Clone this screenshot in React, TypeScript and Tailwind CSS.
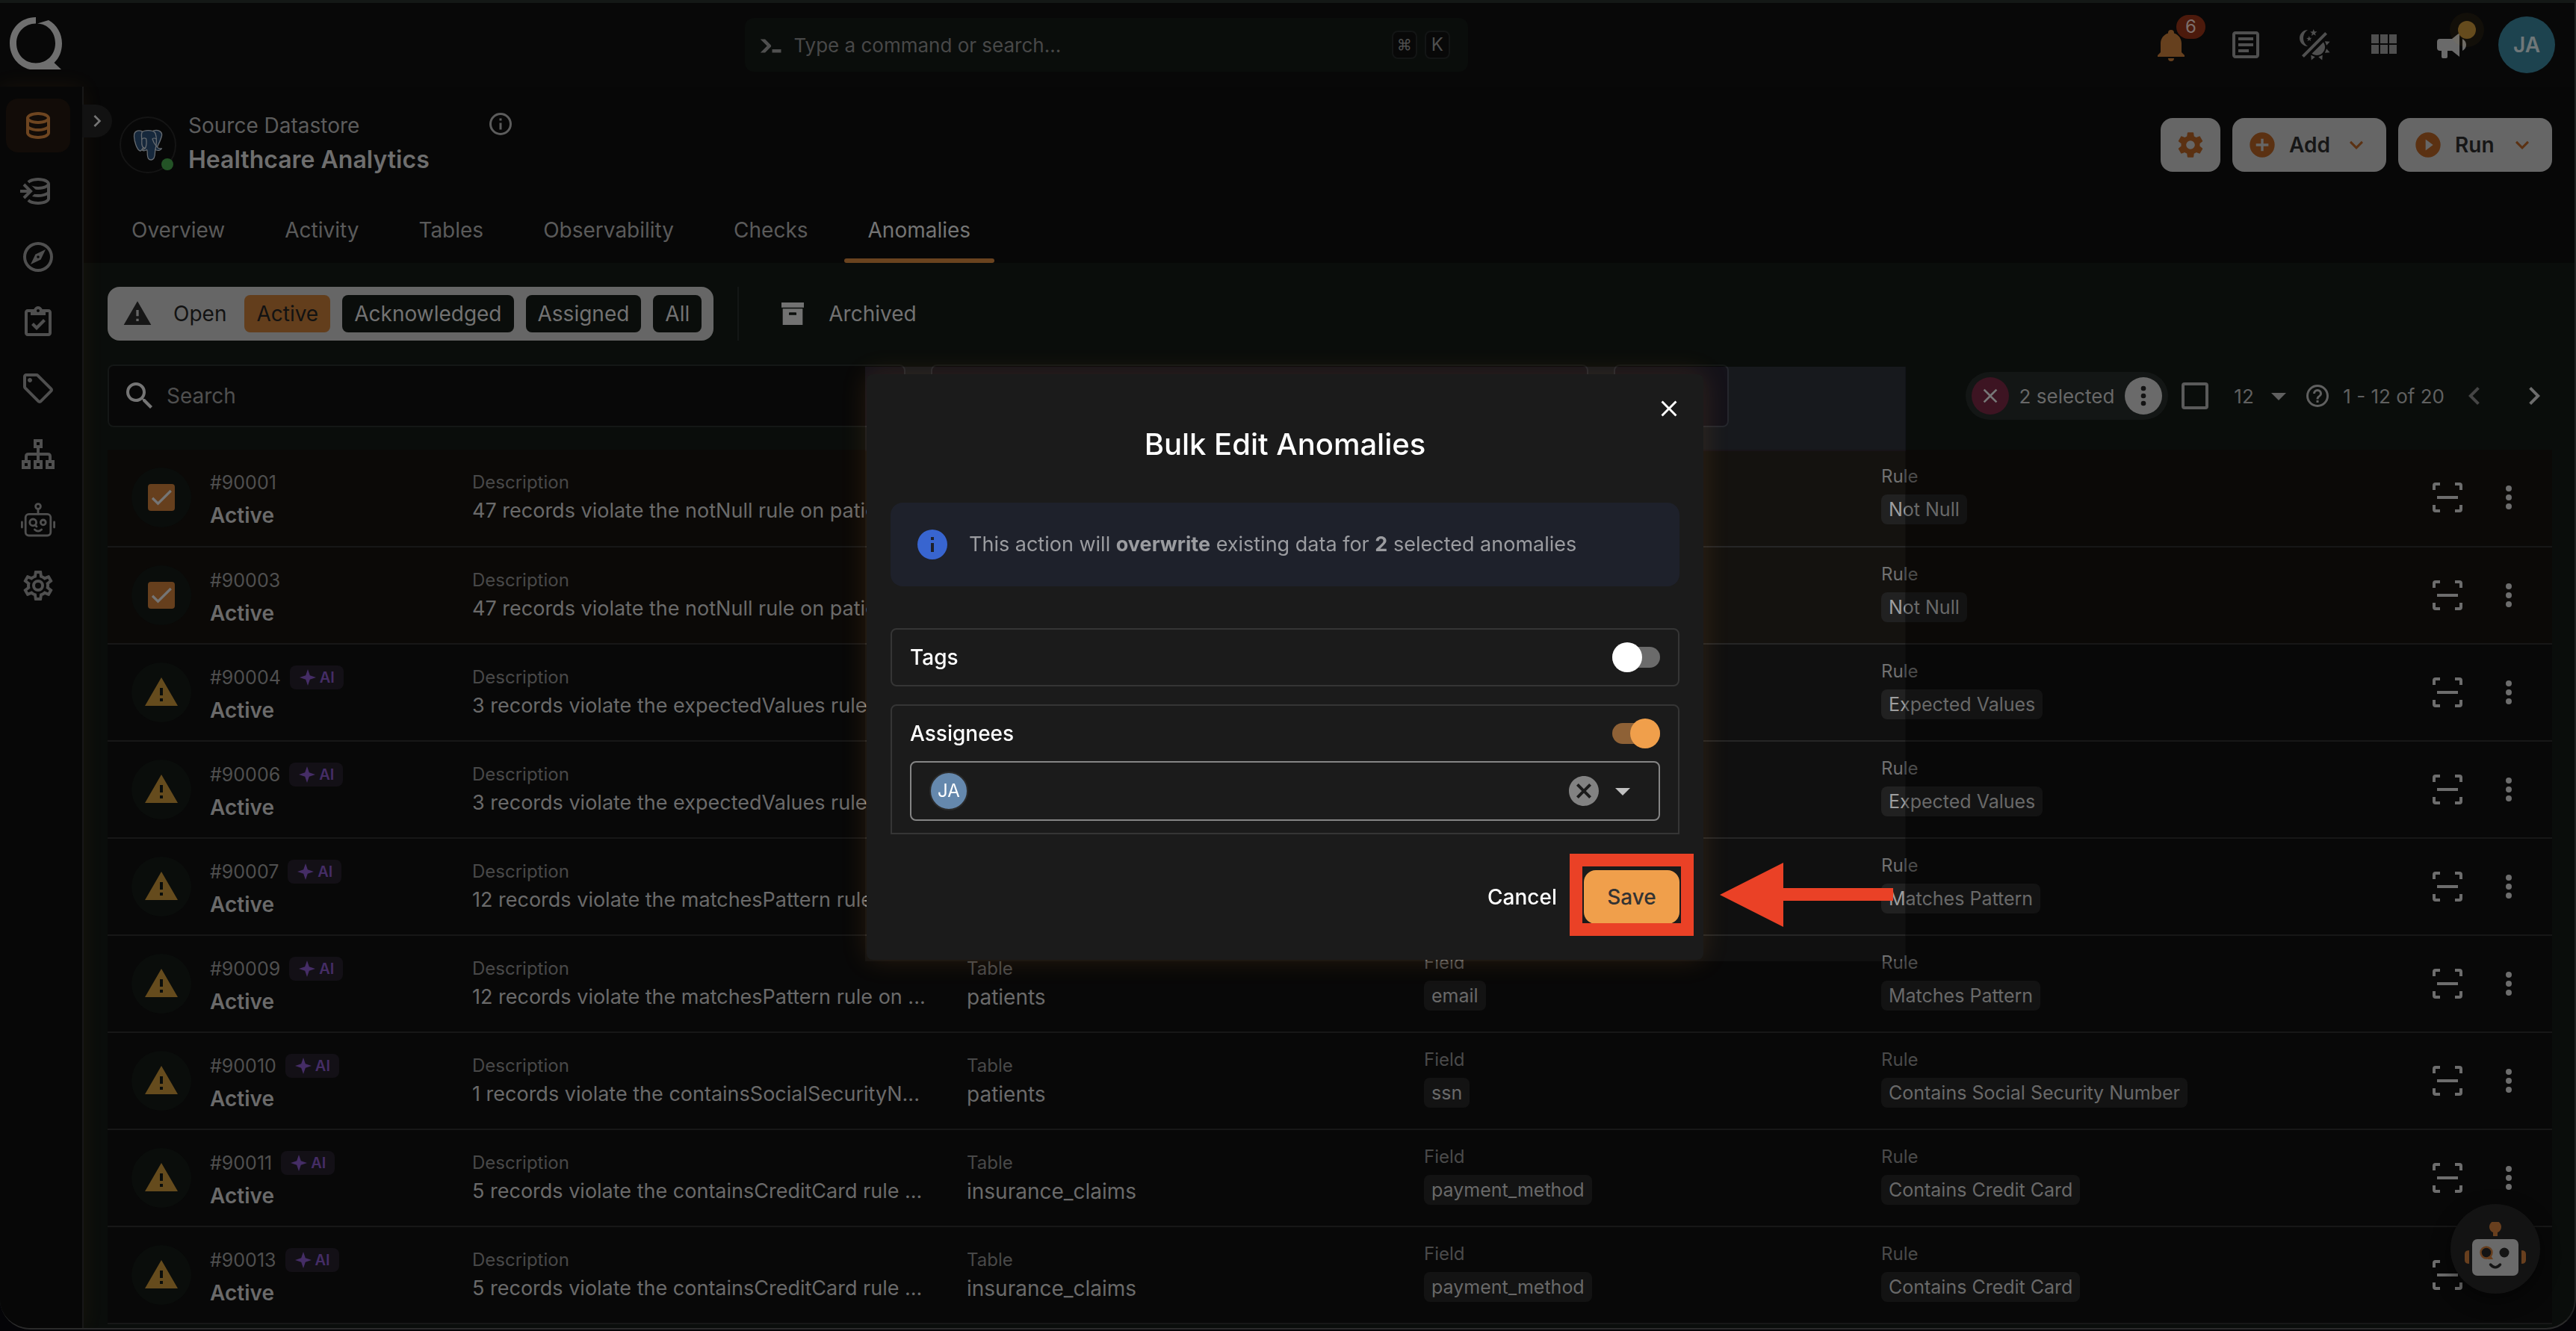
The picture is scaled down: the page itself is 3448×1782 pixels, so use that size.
import React from "react";

const P = {
  database:
    "M12 3C7.58 3 4 4.79 4 7V17C4 19.21 7.59 21 12 21S20 19.21 20 17V7C20 4.79 16.42 3 12 3M18 17C18 17.5 15.87 19 12 19S6 17.5 6 17V14.77C7.61 15.55 9.72 16 12 16S16.39 15.55 18 14.77V17M18 12.45C16.7 13.4 14.42 14 12 14C9.58 14 7.3 13.4 6 12.45V9.64C7.47 10.47 9.61 11 12 11C14.39 11 16.53 10.47 18 9.64V12.45M12 9C8.13 9 6 7.5 6 7S8.13 5 12 5C15.87 5 18 6.5 18 7S15.87 9 12 9Z",
  compass:
    "M7,17L10.2,10.2L17,7L13.8,13.8L7,17M12,11.1A0.9,0.9 0 0,0 11.1,12A0.9,0.9 0 0,0 12,12.9A0.9,0.9 0 0,0 12.9,12A0.9,0.9 0 0,0 12,11.1M12,2A10,10 0 0,1 22,12A10,10 0 0,1 12,22A10,10 0 0,1 2,12A10,10 0 0,1 12,2M12,4A8,8 0 0,0 4,12A8,8 0 0,0 12,20A8,8 0 0,0 20,12A8,8 0 0,0 12,4Z",
  clipboard:
    "M19 3H14.82C14.4 1.84 13.3 1 12 1S9.6 1.84 9.18 3H5C3.9 3 3 3.9 3 5V19C3 20.1 3.9 21 5 21H19C20.1 21 21 20.1 21 19V5C21 3.9 20.1 3 19 3M12 3C12.55 3 13 3.45 13 4S12.55 5 12 5 11 4.55 11 4 11.45 3 12 3M7 7H17V5H19V19H5V5H7V7M7.5 13.5L9 12L11 14L15.5 9.5L17 11L11 17L7.5 13.5Z",
  tag: "M21.41 11.58L12.41 2.58C12.04 2.21 11.53 2 11 2H4C2.9 2 2 2.9 2 4V11C2 11.53 2.21 12.04 2.59 12.41L11.58 21.41C11.95 21.78 12.47 22 13 22S14.05 21.78 14.41 21.41L21.41 14.41C21.79 14.04 22 13.53 22 13C22 12.47 21.79 11.96 21.41 11.58M13 20L4 11V4H11L20 13M6.5 5C7.33 5 8 5.67 8 6.5S7.33 8 6.5 8 5 7.33 5 6.5 5.67 5 6.5 5Z",
  cogOutline:
    "M12,8A4,4 0 0,1 16,12A4,4 0 0,1 12,16A4,4 0 0,1 8,12A4,4 0 0,1 12,8M12,10A2,2 0 0,0 10,12A2,2 0 0,0 12,14A2,2 0 0,0 14,12A2,2 0 0,0 12,10M10,22C9.75,22 9.54,21.82 9.5,21.58L9.13,18.93C8.5,18.68 7.96,18.34 7.44,17.94L4.95,18.95C4.73,19.03 4.46,18.95 4.34,18.73L2.34,15.27C2.21,15.05 2.27,14.78 2.46,14.63L4.57,12.97L4.5,12L4.57,11L2.46,9.37C2.27,9.22 2.21,8.95 2.34,8.73L4.34,5.27C4.46,5.05 4.73,4.96 4.95,5.05L7.44,6.05C7.96,5.66 8.5,5.32 9.13,5.07L9.5,2.42C9.54,2.18 9.75,2 10,2H14C14.25,2 14.46,2.18 14.5,2.42L14.87,5.07C15.5,5.32 16.04,5.66 16.56,6.05L19.05,5.05C19.27,4.96 19.54,5.05 19.66,5.27L21.66,8.73C21.79,8.95 21.73,9.22 21.54,9.37L19.43,11L19.5,12L19.43,13L21.54,14.63C21.73,14.78 21.79,15.05 21.66,15.27L19.66,18.73C19.54,18.95 19.27,19.04 19.05,18.95L16.56,17.95C16.04,18.34 15.5,18.68 14.87,18.93L14.5,21.58C14.46,21.82 14.25,22 14,22H10M11.25,4L10.88,6.61C9.68,6.86 8.62,7.5 7.85,8.39L5.44,7.35L4.69,8.65L6.8,10.2C6.4,11.37 6.4,12.64 6.8,13.8L4.68,15.36L5.43,16.66L7.86,15.62C8.63,16.5 9.68,17.14 10.87,17.38L11.24,20H12.76L13.13,17.39C14.32,17.14 15.37,16.5 16.14,15.62L18.57,16.66L19.32,15.36L17.2,13.81C17.6,12.64 17.6,11.37 17.2,10.2L19.31,8.65L18.56,7.35L16.15,8.39C15.38,7.5 14.32,6.86 13.12,6.62L12.75,4H11.25Z",
  cog: "M12,15.5A3.5,3.5 0 0,1 8.5,12A3.5,3.5 0 0,1 12,8.5A3.5,3.5 0 0,1 15.5,12A3.5,3.5 0 0,1 12,15.5M19.43,12.97C19.47,12.65 19.5,12.33 19.5,12C19.5,11.67 19.47,11.34 19.43,11L21.54,9.37C21.73,9.22 21.78,8.95 21.66,8.73L19.66,5.27C19.54,5.05 19.27,4.96 19.05,5.05L16.56,6.05C16.04,5.66 15.5,5.32 14.87,5.07L14.5,2.42C14.46,2.18 14.25,2 14,2H10C9.75,2 9.54,2.18 9.5,2.42L9.13,5.07C8.5,5.32 7.96,5.66 7.44,6.05L4.95,5.05C4.73,4.96 4.46,5.05 4.34,5.27L2.34,8.73C2.21,8.95 2.27,9.22 2.46,9.37L4.57,11C4.53,11.34 4.5,11.67 4.5,12C4.5,12.33 4.53,12.65 4.57,12.97L2.46,14.63C2.27,14.78 2.21,15.05 2.34,15.27L4.34,18.73C4.46,18.95 4.73,19.03 4.95,18.95L7.44,17.94C7.96,18.34 8.5,18.68 9.13,18.93L9.5,21.58C9.54,21.82 9.75,22 10,22H14C14.25,22 14.46,21.82 14.5,21.58L14.87,18.93C15.5,18.67 16.04,18.34 16.56,17.94L19.05,18.95C19.27,19.03 19.54,18.95 19.66,18.73L21.66,15.27C21.78,15.05 21.73,14.78 21.54,14.63L19.43,12.97Z",
  alert: "M13 14H11V9H13M13 18H11V16H13M1 21H23L12 2L1 21Z",
  archive:
    "M3,3H21V7H3V3M4,8H20V21H4V8M9.5,11A0.5,0.5 0 0,0 9,11.5V13H15V11.5A0.5,0.5 0 0,0 14.5,11H9.5Z",
  magnify:
    "M9.5,3A6.5,6.5 0 0,1 16,9.5C16,11.11 15.41,12.59 14.44,13.73L14.71,14H15.5L20.5,19L19,20.5L14,15.5V14.71L13.73,14.44C12.59,15.41 11.11,16 9.5,16A6.5,6.5 0 0,1 3,9.5A6.5,6.5 0 0,1 9.5,3M9.5,5C7,5 5,7 5,9.5C5,12 7,14 9.5,14C12,14 14,12 14,9.5C14,7 12,5 9.5,5Z",
  bell: "M21,19V20H3V19L5,17V11C5,7.9 7.03,5.17 10,4.29C10,4.19 10,4.1 10,4A2,2 0 0,1 12,2A2,2 0 0,1 14,4C14,4.1 14,4.19 14,4.29C16.97,5.17 19,7.9 19,11V17L21,19M14,21A2,2 0 0,1 12,23A2,2 0 0,1 10,21",
  textBox:
    "M5,3C3.89,3 3,3.89 3,5V19C3,20.11 3.89,21 5,21H19C20.11,21 21,20.11 21,19V5C21,3.89 20.11,3 19,3H5M5,5H19V19H5V5M7,7V9H17V7H7M7,11V13H17V11H7M7,15V17H14V15H7Z",
  theme:
    "M7.5,2C5.71,3.15 4.5,5.18 4.5,7.5C4.5,9.82 5.71,11.85 7.53,13C4.46,13 2,10.54 2,7.5A5.5,5.5 0 0,1 7.5,2M19.07,3.5L20.5,4.93L4.93,20.5L3.5,19.07L19.07,3.5M12.89,5.93L11.41,5L9.97,6L10.39,4.3L9,3.24L10.75,3.12L11.33,1.47L12,3.1L13.73,3.13L12.38,4.26L12.89,5.93M9.59,9.54L8.43,8.81L7.31,9.59L7.65,8.27L6.56,7.44L7.92,7.35L8.37,6.06L8.88,7.33L10.24,7.36L9.19,8.23L9.59,9.54M19,13.5A5.5,5.5 0 0,1 13.5,19C12.28,19 11.15,18.6 10.24,17.93L17.93,10.24C18.6,11.15 19,12.28 19,13.5M14.6,20.08L17.37,18.93L17.13,22.28L14.6,20.08M18.93,17.38L20.08,14.61L22.28,17.15L18.93,17.38M20.08,12.42L18.94,9.64L22.28,9.88L20.08,12.42M9.63,18.93L12.4,20.08L9.87,22.27L9.63,18.93Z",
  grid: "M16 5V11H21V5M10 11H15V5H10M16 18H21V12H16M10 18H15V12H10M4 18H9V12H4M4 11H9V5H4V11Z",
  bullhorn:
    "M12,8H4A2,2 0 0,0 2,10V14A2,2 0 0,0 4,16H5V20A1,1 0 0,0 6,21H8A1,1 0 0,0 9,20V16H12L17,20V4L12,8M21.5,12C21.5,13.71 20.54,15.26 19,16V8C20.53,8.75 21.5,10.3 21.5,12Z",
  console:
    "M13,19V16H21V19H13M8.5,13L2.47,7H6.71L11.67,11.95C12.25,12.54 12.25,13.5 11.67,14.07L6.74,19H2.5L8.5,13Z",
  dots: "M12,16A2,2 0 0,1 14,18A2,2 0 0,1 12,20A2,2 0 0,1 10,18A2,2 0 0,1 12,16M12,10A2,2 0 0,1 14,12A2,2 0 0,1 12,14A2,2 0 0,1 10,12A2,2 0 0,1 12,10M12,4A2,2 0 0,1 14,6A2,2 0 0,1 12,8A2,2 0 0,1 10,6A2,2 0 0,1 12,4Z",
  chevronRight: "M8.59,16.58L13.17,12L8.59,7.41L10,6L16,12L10,18L8.59,16.58Z",
  chevronLeft: "M15.41,16.58L10.83,12L15.41,7.41L14,6L8,12L14,18L15.41,16.58Z",
  chevronDown: "M7.41,8.58L12,13.17L16.59,8.58L18,10L12,16L6,10L7.41,8.58Z",
  menuDown: "M7,10L12,15L17,10H7Z",
  close:
    "M19,6.41L17.59,5L12,10.59L6.41,5L5,6.41L10.59,12L5,17.59L6.41,19L12,13.41L17.59,19L19,17.59L13.41,12L19,6.41Z",
  plusCircle:
    "M17,13H13V17H11V13H7V11H11V7H13V11H17M12,2A10,10 0 0,0 2,12A10,10 0 0,0 12,22A10,10 0 0,0 22,12A10,10 0 0,0 12,2Z",
  playCircle:
    "M10,16.5V7.5L16,12M12,2A10,10 0 0,0 2,12A10,10 0 0,0 12,22A10,10 0 0,0 22,12A10,10 0 0,0 12,2Z",
  closeCircle:
    "M12,2C17.53,2 22,6.47 22,12C22,17.53 17.53,22 12,22C6.47,22 2,17.53 2,12C2,6.47 6.47,2 12,2M15.59,7L12,10.59L8.41,7L7,8.41L10.59,12L7,15.59L8.41,17L12,13.41L15.59,17L17,15.59L13.41,12L17,8.41L15.59,7Z",
  info: "M13,9H11V7H13M13,17H11V11H13M12,2A10,10 0 0,0 2,12A10,10 0 0,0 12,22A10,10 0 0,0 22,12A10,10 0 0,0 12,2Z",
  infoOutline:
    "M11,9H13V7H11M12,20C7.59,20 4,16.41 4,12C4,7.59 7.59,4 12,4C16.41,4 20,7.59 20,12C20,16.41 16.41,20 12,20M12,2A10,10 0 0,0 2,12A10,10 0 0,0 12,22A10,10 0 0,0 22,12A10,10 0 0,0 12,2M11,17H13V11H11V17Z",
  help: "M11,18H13V16H11V18M12,2A10,10 0 0,0 2,12A10,10 0 0,0 12,22A10,10 0 0,0 22,12A10,10 0 0,0 12,2M12,20C7.59,20 4,16.41 4,12C4,7.59 7.59,4 12,4C16.41,4 20,7.59 20,12C20,16.41 16.41,20 12,20M12,6A4,4 0 0,0 8,10H10A2,2 0 0,1 12,8A2,2 0 0,1 14,10C14,12 11,11.75 11,15H13C13,12.75 16,12.5 16,10A4,4 0 0,0 12,6Z",
};

function Icon({ d, className = "" }: { d: string; className?: string }) {
  return (
    <svg viewBox="0 0 24 24" fill="currentColor" aria-hidden="true" className={"shrink-0 " + className}>
      <path d={d} />
    </svg>
  );
}

function Logo() {
  return (
    <svg viewBox="0 0 70 70" className="h-[70px] w-[70px]" fill="#6f6f6f" role="img" aria-label="Home">
      <path
        fillRule="evenodd"
        d="M35 0C15 0 0 15 0 35C0 52 11 66 27 70H69L59.500 61C66 55 70 46 70 35C70 22 63 10 52 4L37 8.500C51 9 61 20 61 35C61 50 50 61.500 35 61.500C20 61.500 9 50 9 35C9 20 20 8.500 35 8.500Z"
      />
    </svg>
  );
}

function DatabaseImport() {
  return (
    <svg viewBox="0 0 24 24" aria-hidden="true" className="h-12 w-12 overflow-visible">
      <path fill="#4f4f4f" d={P.database} />
      <path d="M0 12H6M2.500 7L7.500 12L2.500 17" fill="none" stroke="#070707" strokeWidth="5.500" />
      <path d="M0 12H6.500M2.500 7.500L7 12L2.500 16.500" fill="none" stroke="#4f4f4f" strokeWidth="2" />
    </svg>
  );
}

function Sitemap() {
  return (
    <svg viewBox="0 0 24 24" aria-hidden="true" className="h-12 w-12" fill="none" stroke="#4f4f4f" strokeWidth="2">
      <path d="M10 3H14V7H10ZM2 17H6V21H2ZM10 17H14V21H10ZM18 17H22V21H18ZM12 8V16M4 16V13.500Q4 12 5.500 12H18.500Q20 12 20 13.500V16" />
    </svg>
  );
}

function Bot() {
  return (
    <svg viewBox="0 0 24 24" aria-hidden="true" className="h-12 w-12 overflow-visible" fill="none" stroke="#4f4f4f" strokeWidth="1.400" strokeLinecap="round">
      <circle cx="12" cy="3" r="1.700" />
      <path d="M12 5V8M1.200 13.500V17M22.800 13.500V17M10 15.500L11 16.500M9.700 18.500Q12 20.600 14.300 18.500" />
      <rect x="3.600" y="8.200" width="16.800" height="14.300" rx="2.200" />
      <circle cx="8.600" cy="13.700" r="2.200" />
      <circle cx="15.400" cy="13.700" r="1.700" />
    </svg>
  );
}

function Elephant() {
  return (
    <svg viewBox="0 0 40 42" aria-hidden="true" className="h-[42px] w-10" fill="#16283c" stroke="#666b70" strokeWidth="1.300" strokeLinejoin="round" strokeLinecap="round">
      <path d="M12 2.500C6 .5 1 3 1.500 10C2 17 5 26 8.500 28.500C10.500 30 12 27.500 13 25.500L20 24Z" />
      <path d="M27 2C34 0 39.500 3.500 38.500 8.500C37.500 14 34 20 32.500 24C34 26.500 37 26 38.500 25.800C37.500 28 34 29 31 28L25 22Z" />
      <path d="M12 4C15 1 25 .5 29 4C32 8 31.500 17 31 22C30.500 25 29.500 27 29.500 31C29.500 36 29 40.500 24.500 41C20.500 41.200 19.500 38 19.300 34C19.200 30.500 19.500 28.500 18.500 27.500C16 29 13.500 29 12.500 28C14 27 15.500 27 16.500 25.500C12 25.500 11.500 20 11.800 16C12 11 10.500 8 12 4Z" />
      <path d="M16.500 25.500C18.500 21 18.500 17 17.500 12.500C15.500 11.500 13 12 11.800 13.500M31.500 13C28.500 11.500 26.500 12 26 13C27 17 29 20 31.500 23" fill="none" />
    </svg>
  );
}

function Assistant() {
  return (
    <svg viewBox="0 0 82 72" className="h-[72px] w-[82px]" role="img" aria-label="Assistant">
      <path d="M38 14A8 8 0 1 1 44 14V19H38Z" fill="#683f1e" />
      <path d="M6 38V56Q0 56 0 51V43Q0 38 6 38ZM76 38V56Q82 56 82 51V43Q82 38 76 38Z" fill="#683f1e" />
      <rect x="10" y="23" width="62" height="49" rx="7" fill="#6a6a6a" />
      <circle cx="29" cy="41" r="7.500" fill="#141414" stroke="#683f1e" strokeWidth="2.500" />
      <path d="M31 47L35 45L38 50H31Z" fill="#683f1e" />
      <circle cx="53" cy="41" r="6.500" fill="#141414" />
      <path d="M34.500 57Q41 64.500 47.500 57" fill="none" stroke="#141414" strokeWidth="3.500" strokeLinecap="round" />
    </svg>
  );
}

type Row = {
  id: string;
  selected?: boolean;
  description: string;
  table?: string;
  field?: string;
  rule: string;
};

const rows: Row[] = [
  { id: "#90001", selected: true, description: "47 records violate the notNull rule on patie...", rule: "Not Null" },
  { id: "#90003", selected: true, description: "47 records violate the notNull rule on patie...", rule: "Not Null" },
  { id: "#90004", description: "3 records violate the expectedValues rule ...", rule: "Expected Values" },
  { id: "#90006", description: "3 records violate the expectedValues rule ...", rule: "Expected Values" },
  { id: "#90007", description: "12 records violate the matchesPattern rule on ...", rule: "Matches Pattern" },
  { id: "#90009", description: "12 records violate the matchesPattern rule on ...", table: "patients", field: "email", rule: "Matches Pattern" },
  { id: "#90010", description: "1 records violate the containsSocialSecurityN...", table: "patients", field: "ssn", rule: "Contains Social Security Number" },
  { id: "#90011", description: "5 records violate the containsCreditCard rule ...", table: "insurance_claims", field: "payment_method", rule: "Contains Credit Card" },
  { id: "#90013", description: "5 records violate the containsCreditCard rule ...", table: "insurance_claims", field: "payment_method", rule: "Contains Credit Card" },
];

function ChipCell({ label, value }: { label: string; value: string }) {
  return (
    <>
      <div className="text-2xl leading-10 text-[#4a4a4a]">{label}</div>
      <span className="mt-1 inline-block h-10 rounded-lg bg-[#131313] px-2.5 text-[25px] leading-10 text-[#696969]">{value}</span>
    </>
  );
}

function AnomalyRow({ row }: { row: Row }) {
  return (
    <tr className={"h-[130px] border-b-2 border-[#171717] align-top whitespace-nowrap " + (row.selected ? "bg-[#0b0907]" : "bg-[#080808]")}>
      <td className="p-0 pl-8">
        <div className="flex">
          <div className="mt-6 mr-[25px] grid size-20 place-items-center rounded-full bg-[#0a0d0b]">
            {row.selected ? (
              <span className="relative grid size-9 place-items-center">
                <input type="checkbox" defaultChecked aria-label={"Select " + row.id} className="size-9 appearance-none rounded-sm bg-[#663f1d]" />
                <svg viewBox="0 0 24 24" className="pointer-events-none absolute size-9" fill="none" stroke="#757575" strokeWidth="2.200" aria-hidden="true">
                  <path d="M4 12.500L9 17.500L20.500 6" />
                </svg>
              </span>
            ) : (
              <Icon d={P.alert} className="size-12 text-[#654b1d]" />
            )}
          </div>
          <div className="pt-6">
            <div className="flex items-center gap-3 text-[25px] leading-10 text-[#4f4f4f]">
              {row.id}
              {!row.selected && (
                <span className="flex h-8 items-center gap-1 rounded-lg bg-[#131016] px-3 text-xl font-semibold text-[#452d66]">
                  <svg viewBox="0 0 24 24" className="size-6" fill="currentColor" aria-hidden="true">
                    <path d="M12 1L14.800 9.200L23 12L14.800 14.800L12 23L9.200 14.800L1 12L9.200 9.200Z" />
                  </svg>
                  AI
                </span>
              )}
            </div>
            <div className="text-[28px] leading-[48px] font-semibold text-[#6a6a6a]">Active</div>
          </div>
        </div>
      </td>
      <td className="overflow-hidden p-0 pt-6">
        <div className="text-2xl leading-10 text-[#484848]">Description</div>
        <div className="text-[27px] leading-9 text-[#6a6a6a]">{row.description}</div>
      </td>
      <td className="p-0 pt-6">
        {row.table && (
          <>
            <div className="text-2xl leading-10 text-[#484848]">Table</div>
            <a href="#" className="block text-[28px] leading-9 text-[#6a6a6a]">{row.table}</a>
          </>
        )}
      </td>
      <td className="p-0 pt-4">{row.field && <ChipCell label="Field" value={row.field} />}</td>
      <td className="p-0 pt-4">
        <ChipCell label="Rule" value={row.rule} />
      </td>
      <td className="p-0 pt-10">
        <div className="flex gap-[34px]">
          <button type="button" aria-label="Expand" className="grid size-12 place-items-center">
            <svg viewBox="0 0 40 40" className="size-10" fill="none" stroke="#6d6d6d" strokeWidth="4" aria-hidden="true">
              <path d="M2 10V4Q2 2 4 2H10M30 2H36Q38 2 38 4V10M2 30V36Q2 38 4 38H10M30 38H36Q38 38 38 36V30M6 20H34" />
            </svg>
          </button>
          <button type="button" aria-label="More actions">
            <Icon d={P.dots} className="size-12 text-[#6d6d6d]" />
          </button>
        </div>
      </td>
    </tr>
  );
}

const navItems = [
  { label: "Datastores", icon: <Icon d={P.database} className="size-12 text-[#6e4520]" />, active: true },
  { label: "Enrichment", icon: <DatabaseImport /> },
  { label: "Explore", icon: <Icon d={P.compass} className="size-12" /> },
  { label: "Library", icon: <Icon d={P.clipboard} className="size-12" /> },
  { label: "Tags", icon: <Icon d={P.tag} className="size-12" /> },
  { label: "Flows", icon: <Sitemap /> },
  { label: "Agent", icon: <Bot /> },
  { label: "Settings", icon: <Icon d={P.cogOutline} className="size-12" /> },
];

function TopBar() {
  return (
    <header className="grid h-28 shrink-0 grid-cols-[998fr_968fr_1482fr] items-center bg-[#080808]">
      <a href="#" className="mb-1 ml-[13px] w-fit"><Logo /></a>
      <label className="flex h-[72px] items-center rounded-xl bg-[#0a0d0b] pr-6 pl-[17px]">
        <Icon d={P.console} className="size-9 text-[#4f4f4f]" />
        <input
          type="text"
          aria-label="Command"
          placeholder="Type a command or search..."
          className="ml-3 min-w-0 flex-1 bg-transparent text-[26px] placeholder:text-[#484848]"
        />
        <span className="flex gap-2.5 text-2xl text-[#4f4f4f]">
          <kbd className="grid h-[38px] w-[34px] place-items-center rounded-lg border-2 border-[#131515] bg-[#080808] font-[inherit] text-xl">⌘</kbd>
          <kbd className="grid h-[38px] w-[34px] place-items-center rounded-lg border-2 border-[#131515] bg-[#080808] font-[inherit]">K</kbd>
        </span>
      </label>
      <div className="flex items-center justify-end pr-[26px] text-[#4f4f4f]">
        <button type="button" aria-label="Notifications" className="relative mr-[52px]">
          <Icon d={P.bell} className="size-12 text-[#66401e]" />
          <span className="absolute -top-4 left-[31px] h-8 w-[39px] rounded-2xl bg-[#4c1a0c] text-center text-2xl leading-8 text-[#7d706c]">6</span>
        </button>
        <button type="button" aria-label="Documents" className="mr-11"><Icon d={P.textBox} className="size-12" /></button>
        <button type="button" aria-label="Theme" className="mr-11"><Icon d={P.theme} className="size-12" /></button>
        <button type="button" aria-label="Apps" className="mr-11"><Icon d={P.grid} className="size-12" /></button>
        <button type="button" aria-label="News" className="relative mr-[38px]">
          <Icon d={P.bullhorn} className="size-12 text-[#6a6a6a]" />
          <span className="absolute -top-[19px] left-[21px] grid size-[46px] place-items-center rounded-full bg-[#e0a030]/5">
            <span className="size-6 rounded-full bg-[#654b1d]" />
          </span>
        </button>
        <button type="button" className="grid size-[76px] place-items-center rounded-full bg-[#1d434f] text-[28px] font-semibold text-[#6f7779]">JA</button>
      </div>
    </header>
  );
}

const tabs = ["Overview", "Activity", "Tables", "Observability", "Checks", "Anomalies"];

function DatastoreHeader() {
  return (
    <section className="bg-[#070707] pt-10">
      <div className="flex h-[76px] items-center pr-[30px] pl-12">
        <div className="relative grid size-[76px] place-items-center rounded-full border-2 border-[#141414]">
          <Elephant />
          <span className="absolute right-0.5 bottom-0.5 size-4 rounded-full bg-[#235326]" />
        </div>
        <div className="ml-4 w-[400px]">
          <div className="text-[28px] leading-10 text-[#5c5c5c]">Source Datastore</div>
          <h1 className="text-[32px] leading-[52px] font-semibold text-[#6e6e6e]">Healthcare Analytics</h1>
        </div>
        <button type="button" aria-label="Datastore info" className="mb-14">
          <Icon d={P.infoOutline} className="size-9 text-[#5c5c5c]" />
        </button>
        <div className="ml-auto flex gap-4 text-[28px] font-semibold text-[#161616]">
          <button type="button" aria-label="Settings" className="grid h-[72px] w-20 place-items-center rounded-2xl bg-[#666]">
            <Icon d={P.cog} className="size-10 text-[#5b3112]" />
          </button>
          {[
            { label: "Add", icon: P.plusCircle },
            { label: "Run", icon: P.playCircle },
          ].map((b) => (
            <button key={b.label} type="button" className="flex h-[72px] w-[206px] items-center rounded-2xl bg-[#666] pl-5">
              <Icon d={b.icon} className="size-10 text-[#5b3112]" />
              <span className="ml-4 flex-1 text-left">{b.label}</span>
              <Icon d={P.chevronDown} className="mr-[22px] size-9 text-[#5b3112]" />
            </button>
          ))}
        </div>
      </div>
      <nav className="mt-8 flex gap-4 pl-8 text-[28px]">
        {tabs.map((t) => (
          <a
            key={t}
            href="#"
            className={
              t === "Anomalies"
                ? "relative h-[88px] px-8 leading-[88px] text-[#747474] after:absolute after:inset-x-0 after:bottom-0 after:h-1.5 after:rounded-sm after:bg-[#6a431f]"
                : "h-[88px] px-8 leading-[88px] text-[#5a5a5a]"
            }
          >
            {t}
          </a>
        ))}
      </nav>
    </section>
  );
}

function StatusFilter() {
  return (
    <div className="mt-8 flex h-[72px] text-[28px]">
      <div className="flex items-center rounded-2xl bg-[#666] pr-4 pl-5">
        <Icon d={P.alert} className="size-10 text-[#161616]" />
        <span className="ml-7 text-[#121212]">Open</span>
        <div className="ml-6 flex gap-4">
          <button type="button" className="h-[50px] rounded-lg bg-[#633e1c] px-4 text-[#121212]">Active</button>
          {["Acknowledged", "Assigned", "All"].map((s) => (
            <button key={s} type="button" className="h-[50px] rounded-lg bg-[#0a0d0b] px-4 text-[#727272]">{s}</button>
          ))}
        </div>
      </div>
      <div className="ml-8 border-l-2 border-[#141716]" />
      <button type="button" className="ml-[52px] flex items-center gap-7 text-[#727272]">
        <Icon d={P.archive} className="size-10" />
        Archived
      </button>
    </div>
  );
}

function Toolbar() {
  return (
    <div className="mt-8 flex h-[84px] items-center">
      <label className="flex h-full w-[1068px] items-center rounded-lg border-2 border-[#141716] bg-[#080808] pl-[17px]">
        <Icon d={P.magnify} className="size-12 text-[#757575]" />
        <input type="search" placeholder="Search" aria-label="Search anomalies" className="ml-3 flex-1 bg-transparent text-[28px] placeholder:text-[#4f4f4f]" />
      </label>
      <div className="ml-[34px] h-full w-[880px] rounded-lg border-2 border-[#141716] bg-[#080808]" />
      <div className="ml-[34px] h-full w-[154px] rounded-lg border-2 border-[#141716] bg-[#080808]" />
      <div className="ml-auto flex items-center text-[26px] text-[#606060]">
        <div className="flex h-16 items-center rounded-full bg-[#131615] px-2">
          <button type="button" aria-label="Clear selection" className="grid size-[50px] place-items-center rounded-full bg-[#3d1422]">
            <Icon d={P.close} className="size-8 text-[#777]" />
          </button>
          <span className="mx-3.5 text-[#686868]">2 selected</span>
          <button type="button" aria-label="Bulk actions" className="grid size-[50px] place-items-center rounded-full bg-[#6a6a6a]">
            <Icon d={P.dots} className="size-10 text-[#131313]" />
          </button>
        </div>
        <input type="checkbox" aria-label="Select all" className="ml-[18px] size-9 appearance-none rounded-sm border-4 border-[#5a5a5a]" />
        <span className="relative ml-[34px] flex items-center">
          <select aria-label="Rows per page" defaultValue="12" className="w-[84px] appearance-none bg-transparent">
            <option>12</option>
          </select>
          <Icon d={P.menuDown} className="pointer-events-none absolute right-0 size-12" />
        </span>
        <Icon d={P.help} className="ml-2.5 size-9" />
        <span className="ml-4">1 - 12 of 20</span>
        <button type="button" aria-label="Previous page" className="ml-4"><Icon d={P.chevronLeft} className="size-12 text-[#454545]" /></button>
        <button type="button" aria-label="Next page" className="ml-8"><Icon d={P.chevronRight} className="size-12 text-[#6d6d6d]" /></button>
      </div>
    </div>
  );
}

function Toggle({ label, on }: { label: string; on?: boolean }) {
  return (
    <label className="flex h-[78px] items-center justify-between text-[28px] font-medium text-white">
      {label}
      <input
        type="checkbox"
        role="switch"
        defaultChecked={on}
        className="relative h-7 w-16 appearance-none rounded-full bg-[#6b6b6b] before:absolute before:-top-1.5 before:left-0 before:size-10 before:rounded-full before:bg-white checked:bg-[#8e6136] checked:before:left-6 checked:before:bg-[#f09f4b]"
      />
    </label>
  );
}

function BulkEditDialog() {
  return (
    <div className="fixed inset-0 flex items-center justify-center pt-1 pr-2">
      <div className="relative">
        <div className="absolute -top-2.5 -left-0.5 h-[796px] w-[1393px] bg-white/2 backdrop-brightness-150">
          <div className="h-[113px] bg-[#8050ff]/4" />
        </div>
        <div
          role="dialog"
          aria-label="Bulk Edit Anomalies"
          className="relative w-[1120px] rounded-lg bg-[#1b1b1b] px-8 pt-16 pb-12 shadow-[0_0_36px_rgba(240,150,60,0.14)]"
        >
          <button type="button" aria-label="Close" className="absolute top-7 right-7">
            <Icon d={P.close} className="size-9 text-white" />
          </button>
          <h2 className="text-center text-[40px] leading-[60px] font-medium text-white">Bulk Edit Anomalies</h2>
          <div className="mt-12 flex h-28 items-center rounded-2xl bg-[#1e212b] pl-8 text-[27px] text-[#9b9ca0]">
            <Icon d={P.info} className="mr-[25px] size-12 text-[#3865d0]" />
            <p>
              This action will <b>overwrite</b> existing data for <b>2</b> selected anomalies
            </p>
          </div>
          <div className="mt-14 rounded-lg border-2 border-[#353535] px-6">
            <div className="-my-0.5"><Toggle label="Tags" /></div>
          </div>
          <div className="mt-6 rounded-t-lg border-2 border-[#353535] px-6 pb-4">
            <div className="-my-0.5"><Toggle label="Assignees" on /></div>
            <div className="flex h-20 items-center rounded-lg border-2 border-[#858585] px-6">
              <span className="grid size-[52px] place-items-center rounded-full border-2 border-[#2b2b2b] bg-[#6588ad] text-2xl text-white">JA</span>
              <button type="button" aria-label="Clear assignees" className="mr-1 ml-auto">
                <Icon d={P.closeCircle} className="size-12 text-[#828282]" />
              </button>
              <button type="button" aria-label="Open assignee list" aria-haspopup="listbox">
                <Icon d={P.menuDown} className="size-12 text-[#c0c0c0]" />
              </button>
            </div>
          </div>
          <div className="mt-12 flex items-center justify-end text-[28px] font-medium">
            <button type="button" className="mr-9 text-white">Cancel</button>
            <div className="relative">
              <button type="button" className="h-[72px] w-32 rounded-2xl bg-[#f09f4b] text-[#333]">Save</button>
              <div className="pointer-events-none absolute -inset-x-[19px] -top-[22px] -bottom-4 border-[17px] border-[#ea4126]" />
              <svg viewBox="0 0 232 86" className="pointer-events-none absolute -top-2.5 left-[182px] h-[86px] w-[232px] max-w-none" aria-hidden="true">
                <path d="M0 43L85 0V34H232V51H85V86Z" fill="#ea4126" />
              </svg>
            </div>
          </div>
        </div>
      </div>
    </div>
  );
}

export default function App() {
  return (
    <div className="h-screen overflow-hidden bg-[#040407] font-['Inter','Liberation_Sans',sans-serif]">
      <div className="relative flex h-[calc(100vh-2px)] flex-col overflow-hidden rounded-b-[40px] border-t-4 border-r-2 border-b-2 border-t-[#141816] border-r-[#202221] border-b-[#2a2a2a] bg-[#0a0d0b]">
        <TopBar />
        <div className="flex min-h-0 flex-1">
          <nav className="relative z-10 flex w-28 shrink-0 flex-col gap-4 border-r-2 border-[#171717] bg-[#070707] pt-4 pl-2 text-[#4f4f4f] shadow-[0_0_28px_rgba(240,150,60,0.07)]">
            {navItems.map((n) => (
              <a
                key={n.label}
                href="#"
                aria-label={n.label}
                className={"grid h-[72px] w-[86px] place-items-center rounded-2xl " + (n.active ? "bg-[#120c08]" : "")}
              >
                {n.icon}
              </a>
            ))}
            <button type="button" aria-label="Expand panel" className="absolute top-6 left-[110px] grid h-11 w-10 place-items-center rounded-r-[22px] bg-[#121212]">
              <Icon d={P.chevronRight} className="size-8 text-[#757575]" />
            </button>
          </nav>
          <main className="flex min-w-0 flex-1 flex-col">
            <DatastoreHeader />
            <div className="min-h-0 flex-1 pr-[30px] pl-8">
              <StatusFilter />
              <Toolbar />
              <table className="mt-[30px] w-full table-fixed border-collapse">
                <colgroup>
                  <col className="w-[488px]" />
                  <col className="w-[662px]" />
                  <col className="w-[612px]" />
                  <col className="w-[612px]" />
                  <col />
                  <col className="w-[164px]" />
                </colgroup>
                <tbody>
                  {rows.map((r) => (
                    <AnomalyRow key={r.id} row={r} />
                  ))}
                </tbody>
              </table>
            </div>
          </main>
        </div>
        <button type="button" className="absolute right-[46px] bottom-[46px] grid size-[120px] place-items-center rounded-full bg-[#131313] shadow-[0_8px_24px_rgba(0,0,0,0.5)]">
          <Assistant />
        </button>
      </div>
      <BulkEditDialog />
    </div>
  );
}
